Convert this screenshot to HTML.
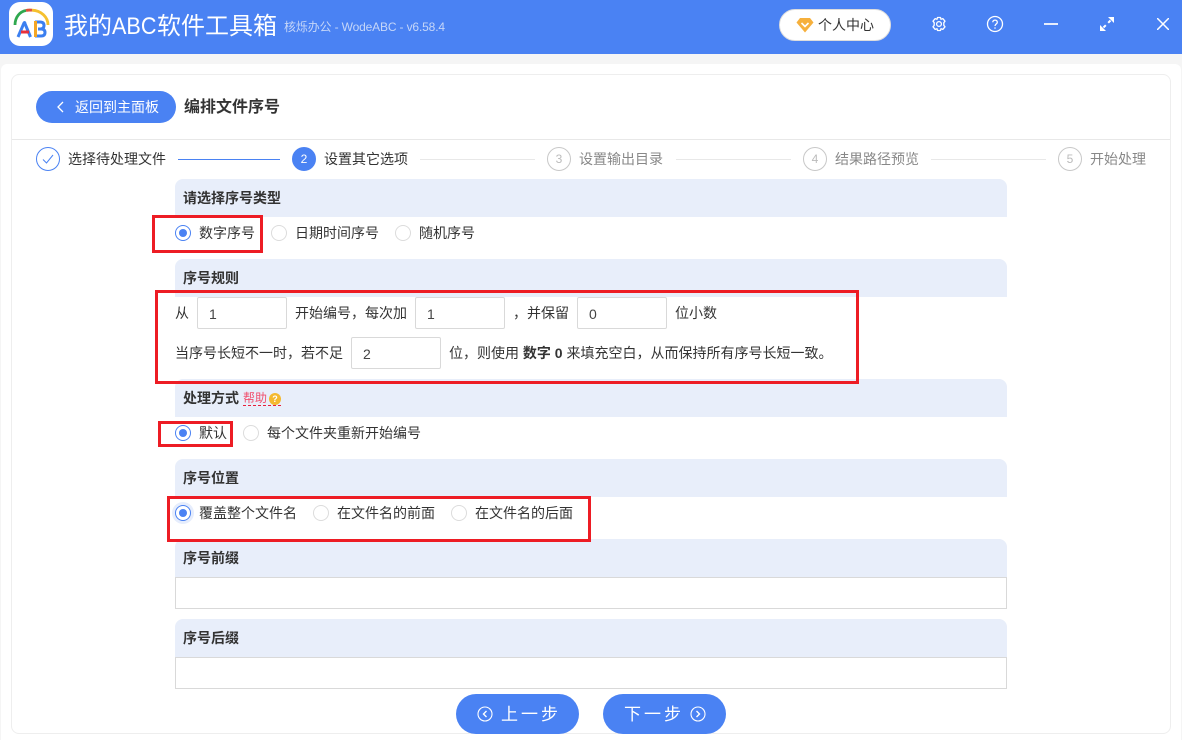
<!DOCTYPE html>
<html lang="zh"><head><meta charset="utf-8"><title>我的ABC软件工具箱</title>
<style>
*{box-sizing:border-box}
html,body{margin:0;padding:0}
body{width:1182px;height:740px;position:relative;overflow:hidden;background:#f5f5f5;font-family:"Liberation Sans","Noto Sans CJK SC",sans-serif;font-size:14px;color:#333}
.a{position:absolute;white-space:nowrap}
.t{position:absolute;white-space:nowrap;line-height:20px;height:20px}
.head{left:175px;width:832px;height:38px;background:#e8eefa;border-radius:8px 8px 0 0}
.ht{position:absolute;left:183px;white-space:nowrap;font-weight:bold;font-size:14px;line-height:20px;color:#333}
.r{position:absolute;width:16px;height:16px;border:1px solid #dcdcdc;border-radius:50%;background:#fff}
.r.on{border-color:#4a82f3}
.r.f{box-shadow:0 0 0 3px #e6edfc}
.r.on:after{content:"";position:absolute;left:3px;top:3px;width:8px;height:8px;border-radius:50%;background:#4a82f3}
.in{position:absolute;width:90px;height:32px;border:1px solid #d9d9d9;border-radius:2px;background:#fff;padding-left:11px;line-height:32px;font-size:14px;color:#444}
.red{position:absolute;border:3px solid #ed1c24}
.n{position:absolute;width:24px;height:24px;border-radius:50%;border:1px solid #c8c8c8;color:#bbb;font-size:12px;text-align:center;line-height:23px;background:#fff}
.l{position:absolute;height:1px;top:159px;background:#e8e8e8}
.g{color:#888}
.box{position:absolute;left:175px;width:832px;height:32px;border:1px solid #d9d9d9;background:#fff}
.btn{position:absolute;top:694px;height:40px;border-radius:20px;background:#4a82f3}
</style></head><body>
<div class="a" style="left:0;top:0;width:1182px;height:54px;background:#4a82f3"></div>
<div class="a" style="left:9px;top:2px;width:44px;height:44px;border-radius:11px;background:#fff"></div>
<svg class="a" style="left:9px;top:2px" width="44" height="44" viewBox="0 0 44 44" fill="none">
<path d="M6 23C6 15 11 9.500 17 8.500" stroke="#2fa84f" stroke-width="2.800"/><path d="M17 8.500C19 8 21 8 23 8.200" stroke="#e0503a" stroke-width="2.800"/><path d="M23 8.200C32 8.500 39 15 39 23" stroke="#f5c02e" stroke-width="2.800"/>
<path d="M9 35L15 21Q15.500 20 16 21" stroke="#3b7ff0" stroke-width="3"/><path d="M15.500 20.500L21.500 35" stroke="#3b7ff0" stroke-width="3"/><path d="M12 30H20" stroke="#e8303a" stroke-width="3"/>
<path d="M26 20H31Q35 20 35 23.500Q35 27 31 27H29" stroke="#3b7ff0" stroke-width="3"/><path d="M29 27H32Q36 27 36 30.500Q36 34 32 34H26" stroke="#3b7ff0" stroke-width="3"/><path d="M26.500 19V35" stroke="#f5a623" stroke-width="3"/>
</svg>
<div class="a" style="left:64px;top:10px;font-size:24px;line-height:34px;color:#fff">我的<span style="display:inline-block;width:45px;transform:scaleX(.9);transform-origin:left center">ABC</span>软件工具箱</div>
<div class="a" style="left:284px;top:17px;font-size:12px;line-height:20px;color:#c5d6f8;letter-spacing:-.15px">核烁办公 - WodeABC - v6.58.4</div>

<div class="a" style="left:779px;top:9px;width:112px;height:32px;border-radius:16px;background:#fff;border:1px solid #ddd"></div>
<svg class="a" style="left:796px;top:17px" width="18" height="16" viewBox="0 0 18 16"><path d="M4 1H14L17.500 5.500L9 15.500L.5 5.500Z" fill="#f6b03c"/><path d="M5.500 6L9 9.500L12.500 6" stroke="#fff" stroke-width="1.600" fill="none"/></svg>
<div class="a" style="left:818px;top:15px;font-size:14px;line-height:20px;color:#333">个人中心</div>
<svg class="a" style="left:930px;top:15px" width="18" height="18" viewBox="0 0 18 18" fill="none" stroke="#fff" stroke-width="1.300"><path d="M7.500 2.500H10.500L11 4.300L12.800 3.600L15 6.200L13.800 7.700V10.300L15 11.800L12.800 14.400L11 13.700L10.500 15.500H7.500L7 13.700L5.200 14.400L3 11.800L4.200 10.300V7.700L3 6.200L5.200 3.600L7 4.300Z" stroke-linejoin="round"/><circle cx="9" cy="9" r="2.400"/></svg>
<svg class="a" style="left:986px;top:15px" width="18" height="18" viewBox="0 0 18 18" fill="none" stroke="#fff" stroke-width="1.300"><circle cx="9" cy="9" r="7.500"/><path d="M6.800 7.200C6.800 4.400 11.300 4.400 11.300 7.200C11.300 9 9 9 9 11"/><path d="M9 12.400V13.700"/></svg>
<div class="a" style="left:1044px;top:23px;width:14px;height:2px;background:#e6edfc"></div>
<svg class="a" style="left:1100px;top:17px" width="14" height="14" viewBox="0 0 14 14" fill="none" stroke="#fff" stroke-width="2"><path d="M3.500 10.500L5.800 8.200M8.200 5.800L10.500 3.500"/><path d="M8 0H14V6Z" fill="#fff" stroke="none"/><path d="M0 8V14H6Z" fill="#fff" stroke="none"/></svg>
<svg class="a" style="left:1157px;top:18px" width="12" height="12" viewBox="0 0 12 12" stroke="#fff" stroke-width="1.500"><path d="M0 0L12 12M12 0L0 12"/></svg>

<div class="a" style="left:1px;top:64px;width:1180px;height:676px;background:#fff;border-radius:6px 6px 0 0"></div>
<div class="a" style="left:11px;top:74px;width:1160px;height:660px;background:#fff;border:1px solid #eee;border-radius:8px"></div>
<div class="a" style="left:12px;top:139px;width:1158px;height:1px;background:#e8e8e8"></div>

<div class="a" style="left:36px;top:91px;width:140px;height:32px;border-radius:16px;background:#4a82f3"></div>
<svg class="a" style="left:54px;top:100px" width="12" height="14" viewBox="0 0 12 14" fill="none" stroke="#fff" stroke-width="1.300"><path d="M9 2L4 7L9 12"/></svg>
<div class="t" style="left:75px;top:97px;color:#fff">返回到主面板</div>
<div class="t" style="left:184px;top:98px;font-size:16px;font-weight:bold;color:#333">编排文件序号</div>

<div class="n" style="left:36px;top:147px;border-color:#4a82f3"></div>
<svg class="a" style="left:41px;top:152px" width="14" height="14" viewBox="0 0 14 14" fill="none" stroke="#4a82f3" stroke-width="1"><path d="M2 7.500L5.500 11L12 3"/></svg>
<div class="t" style="left:68px;top:149px">选择待处理文件</div>
<div class="l" style="left:178px;width:102px;background:#4a82f3"></div>
<div class="n" style="left:292px;top:147px;background:#4a82f3;border-color:#4a82f3;color:#fff">2</div>
<div class="t" style="left:324px;top:149px">设置其它选项</div>
<div class="l" style="left:420px;width:115px"></div>
<div class="n" style="left:547px;top:147px">3</div>
<div class="t g" style="left:579px;top:149px">设置输出目录</div>
<div class="l" style="left:676px;width:115px"></div>
<div class="n" style="left:803px;top:147px">4</div>
<div class="t g" style="left:835px;top:149px">结果路径预览</div>
<div class="l" style="left:931px;width:115px"></div>
<div class="n" style="left:1058px;top:147px">5</div>
<div class="t g" style="left:1090px;top:149px">开始处理</div>

<div class="a head" style="top:179px"></div><div class="ht" style="top:188px">请选择序号类型</div>
<div class="r on" style="left:175px;top:225px"></div><div class="t" style="left:199px;top:223px">数字序号</div>
<div class="r" style="left:271px;top:225px"></div><div class="t" style="left:295px;top:223px">日期时间序号</div>
<div class="r" style="left:395px;top:225px"></div><div class="t" style="left:419px;top:223px">随机序号</div>

<div class="a head" style="top:259px"></div><div class="ht" style="top:268px">序号规则</div>
<div class="t" style="left:175px;top:303px">从</div>
<div class="in" style="left:197px;top:297px">1</div>
<div class="t" style="left:295px;top:303px">开始编号，每次加</div>
<div class="in" style="left:415px;top:297px">1</div>
<div class="t" style="left:513px;top:303px">，并保留</div>
<div class="in" style="left:577px;top:297px">0</div>
<div class="t" style="left:675px;top:303px">位小数</div>
<div class="t" style="left:175px;top:343px">当序号长短不一时，若不足</div>
<div class="in" style="left:351px;top:337px">2</div>
<div class="t" style="left:449px;top:343px">位，则使用 <b>数字 0</b> 来填充空白，从而保持所有序号长短一致。</div>

<div class="a head" style="top:379px"></div><div class="ht" style="top:388px">处理方式</div>
<div class="t" style="left:243px;top:388px;color:#f0506e;font-size:12px;height:18px;line-height:20px;border-bottom:1px dashed #e8203a;width:38px">帮助</div>
<div class="a" style="left:269px;top:393px;width:12px;height:12px;border-radius:50%;background:#f4b92f;color:#fff;font-size:9px;line-height:12px;text-align:center;font-weight:bold">?</div>
<div class="r on" style="left:175px;top:425px"></div><div class="t" style="left:199px;top:423px">默认</div>
<div class="r" style="left:243px;top:425px"></div><div class="t" style="left:267px;top:423px">每个文件夹重新开始编号</div>

<div class="a head" style="top:459px"></div><div class="ht" style="top:468px">序号位置</div>
<div class="r on f" style="left:175px;top:505px"></div><div class="t" style="left:199px;top:503px">覆盖整个文件名</div>
<div class="r" style="left:313px;top:505px"></div><div class="t" style="left:337px;top:503px">在文件名的前面</div>
<div class="r" style="left:451px;top:505px"></div><div class="t" style="left:475px;top:503px">在文件名的后面</div>

<div class="a head" style="top:539px"></div><div class="ht" style="top:548px">序号前缀</div>
<div class="box" style="top:577px"></div>
<div class="a head" style="top:619px"></div><div class="ht" style="top:628px">序号后缀</div>
<div class="box" style="top:657px"></div>

<div class="red" style="left:152px;top:215px;width:111px;height:38px"></div>
<div class="red" style="left:155px;top:290px;width:704px;height:94px"></div>
<div class="red" style="left:158px;top:421px;width:75px;height:26px"></div>
<div class="red" style="left:167px;top:496px;width:424px;height:46px"></div>

<div class="btn" style="left:456px;width:123px"></div>
<svg class="a" style="left:477px;top:706px" width="16" height="16" viewBox="0 0 16 16" fill="none" stroke="#fff" stroke-width="1.100"><circle cx="8" cy="8" r="7"/><path d="M9.500 5L6.500 8L9.500 11" stroke-width="1.400"/></svg>
<div class="t" style="left:501px;top:705px;color:#fff;font-size:17px;letter-spacing:3px">上一步</div>
<div class="btn" style="left:603px;width:123px"></div>
<div class="t" style="left:624px;top:705px;color:#fff;font-size:17px;letter-spacing:3px">下一步</div>
<svg class="a" style="left:690px;top:706px" width="16" height="16" viewBox="0 0 16 16" fill="none" stroke="#fff" stroke-width="1.100"><circle cx="8" cy="8" r="7"/><path d="M6.500 5L9.500 8L6.500 11" stroke-width="1.400"/></svg>
</body></html>
